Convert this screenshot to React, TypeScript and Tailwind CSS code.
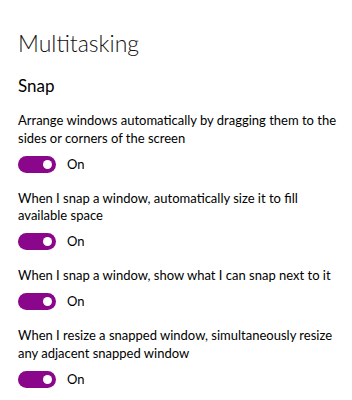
const SETTINGS = [
  "Arrange windows automatically by dragging them to the sides or corners of the screen",
  "When I snap a window, automatically size it to fill available space",
  "When I snap a window, show what I can snap next to it",
  "When I resize a snapped window, simultaneously resize any adjacent snapped window",
];

function Toggle() {
  return (
    <div className="flex items-center gap-[11px]">
      <div className="flex h-[17px] w-[38px] items-center justify-end rounded-full bg-[#8a078c] pr-[4px]">
        <div className="h-[9px] w-[9px] rounded-full bg-white" />
      </div>
      <span className="text-[13px] leading-none text-black">On</span>
    </div>
  );
}

export default function App() {
  return (
    <div
      className="h-[400px] w-[352px] bg-white pl-[18px] pr-[6px] pt-[29px] text-black"
      style={{ fontFamily: 'Lato, "Noto Sans", sans-serif' }}
    >
      <h1 className="text-[23px] font-light leading-[28px] text-[#111]">Multitasking</h1>
      <h2 className="mt-[18px] text-[17px] font-normal leading-[22px]">Snap</h2>
      <div className="mt-[15px] flex flex-col gap-[17px]">
        {SETTINGS.map((text) => (
          <div key={text} className="flex flex-col gap-[8.5px]">
            <p className="pr-[4px] text-[13px] leading-[17.5px]">{text}</p>
            <Toggle />
          </div>
        ))}
      </div>
    </div>
  );
}
